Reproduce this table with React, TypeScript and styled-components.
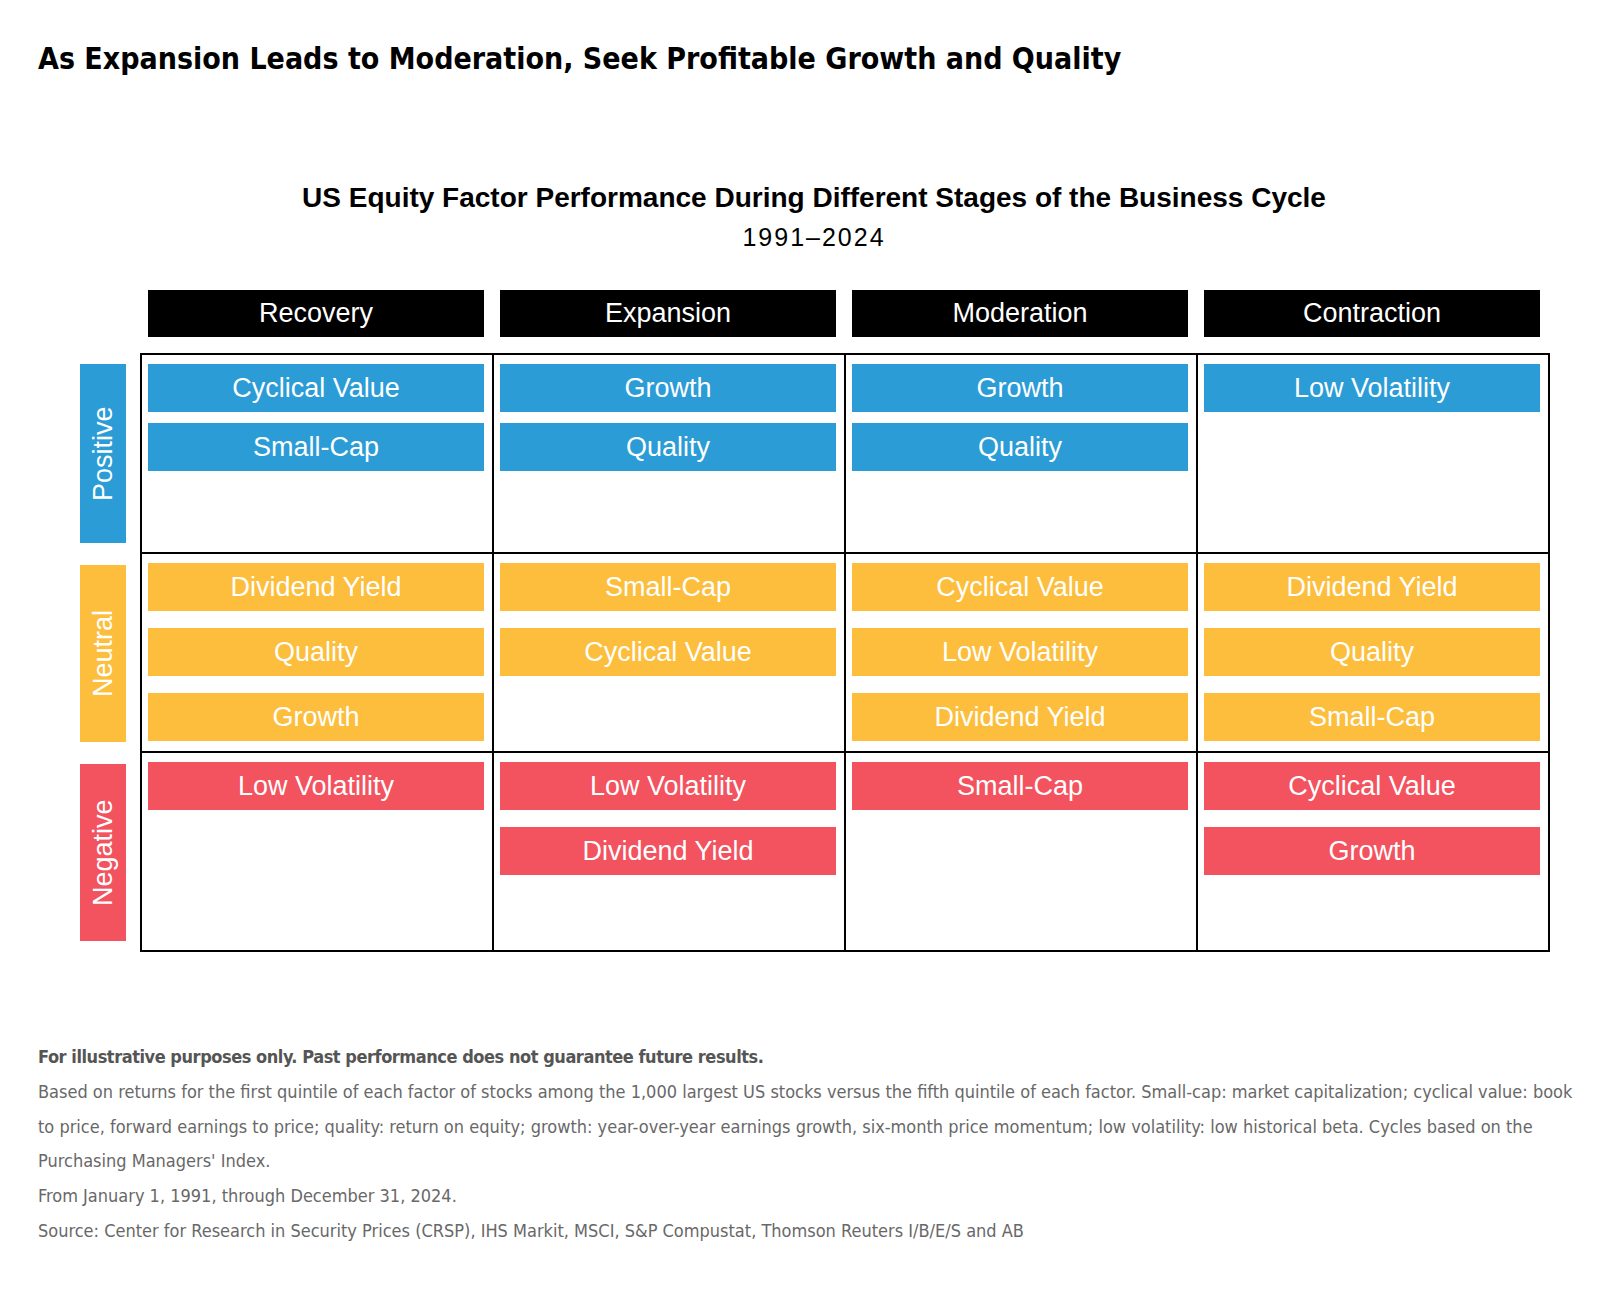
import React from "react";
import styled, { createGlobalStyle } from "styled-components";

const GlobalStyle = createGlobalStyle`
  *, *::before, *::after { box-sizing: border-box; }
  html, body { margin: 0; padding: 0; background: #ffffff; }
  body { font-family: "Liberation Sans", Arial, sans-serif; color: #000; }
`;

type Tone = "pos" | "neu" | "neg";
const toneColor: Record<Tone, string> = {
  pos: "#2b9cd6",
  neu: "#fcbe3c",
  neg: "#f3525f",
};

const Page = styled.div`
  width: 1608px;
  padding: 0 18px 40px 38px;
`;

const Title = styled.h1`
  margin: 0;
  padding-top: 39px;
  font-family: "Liberation Sans Narrow", "DejaVu Sans Condensed", Roboto, sans-serif;
  font-stretch: condensed;
  font-weight: 700;
  font-size: 30px;
  line-height: 40px;
`;

const ChartHead = styled.div`
  margin-top: 102px;
  text-align: center;
`;

const ChartTitle = styled.div`
  font-weight: 700;
  font-size: 28px;
  line-height: 34px;
`;

const ChartSub = styled.div`
  font-size: 25px;
  line-height: 32px;
  letter-spacing: 2px;
  margin-top: 6px;
`;

const ChartBody = styled.div`
  margin-top: 37px;
  margin-left: 42px;
  display: grid;
  grid-template-columns: 46px 1410px;
  column-gap: 14px;
`;

const HeaderRow = styled.div`
  grid-column: 2;
  display: grid;
  grid-template-columns: repeat(4, 336px);
  column-gap: 16px;
  padding-left: 8px;
  margin-bottom: 16px;
`;

const HeaderBox = styled.div`
  height: 47px;
  background: #000;
  color: #fff;
  font-size: 27px;
  display: flex;
  align-items: center;
  justify-content: center;
`;

const SideLabel = styled.div<{ $tone: Tone }>`
  grid-column: 1;
  margin: 11px 0;
  background: ${(p) => toneColor[p.$tone]};
  color: #fff;
  font-size: 27px;
  display: flex;
  align-items: center;
  justify-content: center;
  writing-mode: vertical-rl;
  transform: rotate(180deg);
`;

const MatrixRow = styled.div<{ $first?: boolean }>`
  grid-column: 2;
  display: grid;
  grid-template-columns: repeat(4, 352px);
  border-left: 2px solid #000;
  border-top: ${(p) => (p.$first ? "2px solid #000" : "none")};
`;

const Cell = styled.div<{ $gap: number }>`
  height: 199px;
  border-right: 2px solid #000;
  border-bottom: 2px solid #000;
  padding: 9px 8px 0 6px;
  display: flex;
  flex-direction: column;
  gap: ${(p) => p.$gap}px;
`;

const FactorBox = styled.div<{ $tone: Tone }>`
  height: 48px;
  flex: 0 0 48px;
  background: ${(p) => toneColor[p.$tone]};
  color: #fff;
  font-size: 27px;
  display: flex;
  align-items: center;
  justify-content: center;
`;

const Footer = styled.div`
  margin-top: 88px;
  font-family: "Liberation Sans Narrow", "DejaVu Sans Condensed", Roboto, sans-serif;
  font-stretch: condensed;
  font-size: 18px;
  line-height: 34.8px;
  color: #686868;
`;

const FootStrong = styled.p`
  margin: 0;
  font-weight: 700;
  letter-spacing: -0.45px;
  color: #555;
`;

const FootText = styled.p`
  margin: 0;
`;

const stages = ["Recovery", "Expansion", "Moderation", "Contraction"];

const rows: { tone: Tone; label: string; gap: number; cells: string[][] }[] = [
  {
    tone: "pos",
    label: "Positive",
    gap: 11,
    cells: [
      ["Cyclical Value", "Small-Cap"],
      ["Growth", "Quality"],
      ["Growth", "Quality"],
      ["Low Volatility"],
    ],
  },
  {
    tone: "neu",
    label: "Neutral",
    gap: 17,
    cells: [
      ["Dividend Yield", "Quality", "Growth"],
      ["Small-Cap", "Cyclical Value"],
      ["Cyclical Value", "Low Volatility", "Dividend Yield"],
      ["Dividend Yield", "Quality", "Small-Cap"],
    ],
  },
  {
    tone: "neg",
    label: "Negative",
    gap: 17,
    cells: [
      ["Low Volatility"],
      ["Low Volatility", "Dividend Yield"],
      ["Small-Cap"],
      ["Cyclical Value", "Growth"],
    ],
  },
];

export default function App() {
  return (
    <>
      <GlobalStyle />
      <Page>
        <Title>As Expansion Leads to Moderation, Seek Profitable Growth and Quality</Title>
        <ChartHead>
          <ChartTitle>US Equity Factor Performance During Different Stages of the Business Cycle</ChartTitle>
          <ChartSub>1991–2024</ChartSub>
        </ChartHead>
        <ChartBody>
          <HeaderRow>
            {stages.map((s) => (
              <HeaderBox key={s}>{s}</HeaderBox>
            ))}
          </HeaderRow>
          {rows.map((r, i) => (
            <React.Fragment key={r.label}>
              <SideLabel $tone={r.tone}>{r.label}</SideLabel>
              <MatrixRow $first={i === 0}>
                {r.cells.map((items, j) => (
                  <Cell key={j} $gap={r.gap}>
                    {items.map((it) => (
                      <FactorBox key={it} $tone={r.tone}>
                        {it}
                      </FactorBox>
                    ))}
                  </Cell>
                ))}
              </MatrixRow>
            </React.Fragment>
          ))}
        </ChartBody>
        <Footer>
          <FootStrong>For illustrative purposes only. Past performance does not guarantee future results.</FootStrong>
          <FootText>
            Based on returns for the first quintile of each factor of stocks among the 1,000 largest US stocks versus the fifth quintile of each factor. Small-cap: market capitalization; cyclical value: book to price, forward earnings to price; quality: return on equity; growth: year-over-year earnings growth, six-month price momentum; low volatility: low historical beta. Cycles based on the Purchasing Managers' Index.
          </FootText>
          <FootText>From January 1, 1991, through December 31, 2024.</FootText>
          <FootText>Source: Center for Research in Security Prices (CRSP), IHS Markit, MSCI, S&amp;P Compustat, Thomson Reuters I/B/E/S and AB</FootText>
        </Footer>
      </Page>
    </>
  );
}
